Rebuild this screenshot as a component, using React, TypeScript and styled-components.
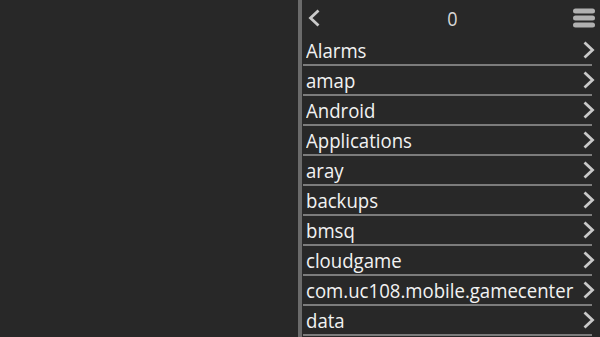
import * as React from 'react';
import styled, { createGlobalStyle } from 'styled-components';

const GlobalStyle = createGlobalStyle`
    html, body {
        margin: 0;
        padding: 0;
        background: #282828;
        overflow: hidden;
    }
    body {
        font-family: 'Open Sans', 'DejaVu Sans', sans-serif;
    }
`;

const Screen = styled.div`
    width: 600px;
    height: 337px;
    display: flex;
    background: #282828;
    overflow: hidden;
`;

const Blank = styled.div`
    width: 298px;
    flex-shrink: 0;
`;

const Divider = styled.div`
    width: 4px;
    flex-shrink: 0;
    background: #6b6b6b;
`;

const Panel = styled.div`
    flex: 1;
    display: flex;
    flex-direction: column;
    padding-left: 1px;
`;

const Header = styled.div`
    height: 36px;
    display: flex;
    align-items: center;
    justify-content: space-between;
    padding: 0 5px 0 5px;
    flex-shrink: 0;
`;

const Count = styled.div`
    color: #d8d8d8;
    font-size: 18px;
    line-height: 1;
    margin-left: 12px;
    transform: scaleY(1.1);
`;

const Row = styled.div`
    height: 28px;
    display: flex;
    align-items: center;
    justify-content: space-between;
    padding: 0 0 0 3px;
    margin-right: 8px;
    border-bottom: 2px solid #7c7c7c;
    flex-shrink: 0;
`;

const Name = styled.span`
    display: inline-block;
    color: #f2f2f2;
    font-size: 18.6px;
    line-height: 1;
    white-space: nowrap;
    transform: scaleY(1.12);
    padding-top: 1px;
`;

const Arrow = styled.span`
    display: flex;
    margin-right: -3px;
`;

const Chevron: React.FC<{ left?: boolean }> = ({ left }) => (
    <svg width="12" height="18" viewBox="0 0 12 18">
        <path
            d={left ? 'M10.5 1.5 L2.5 9 L10.5 16.5' : 'M1.5 1.5 L9.5 9 L1.5 16.5'}
            fill="none"
            stroke="#c9c9c9"
            strokeWidth="2.8"
        />
    </svg>
);

const MenuIcon = () => (
    <svg width="22" height="20" viewBox="0 0 22 20">
        {[0.5, 7.5, 14.5].map((y) => (
            <rect key={y} x="0" y={y} width="22" height="5" rx="2.5" fill="#b0b0b0" />
        ))}
    </svg>
);

const folders = [
    'Alarms',
    'amap',
    'Android',
    'Applications',
    'aray',
    'backups',
    'bmsq',
    'cloudgame',
    'com.uc108.mobile.gamecenter',
    'data',
];

export default function App() {
    return (
        <>
            <GlobalStyle />
            <Screen>
                <Blank />
                <Divider />
                <Panel>
                    <Header>
                        <Chevron left />
                        <Count>0</Count>
                        <MenuIcon />
                    </Header>
                    {folders.map((f) => (
                        <Row key={f}>
                            <Name>{f}</Name>
                            <Arrow>
                                <Chevron />
                            </Arrow>
                        </Row>
                    ))}
                </Panel>
            </Screen>
        </>
    );
}
